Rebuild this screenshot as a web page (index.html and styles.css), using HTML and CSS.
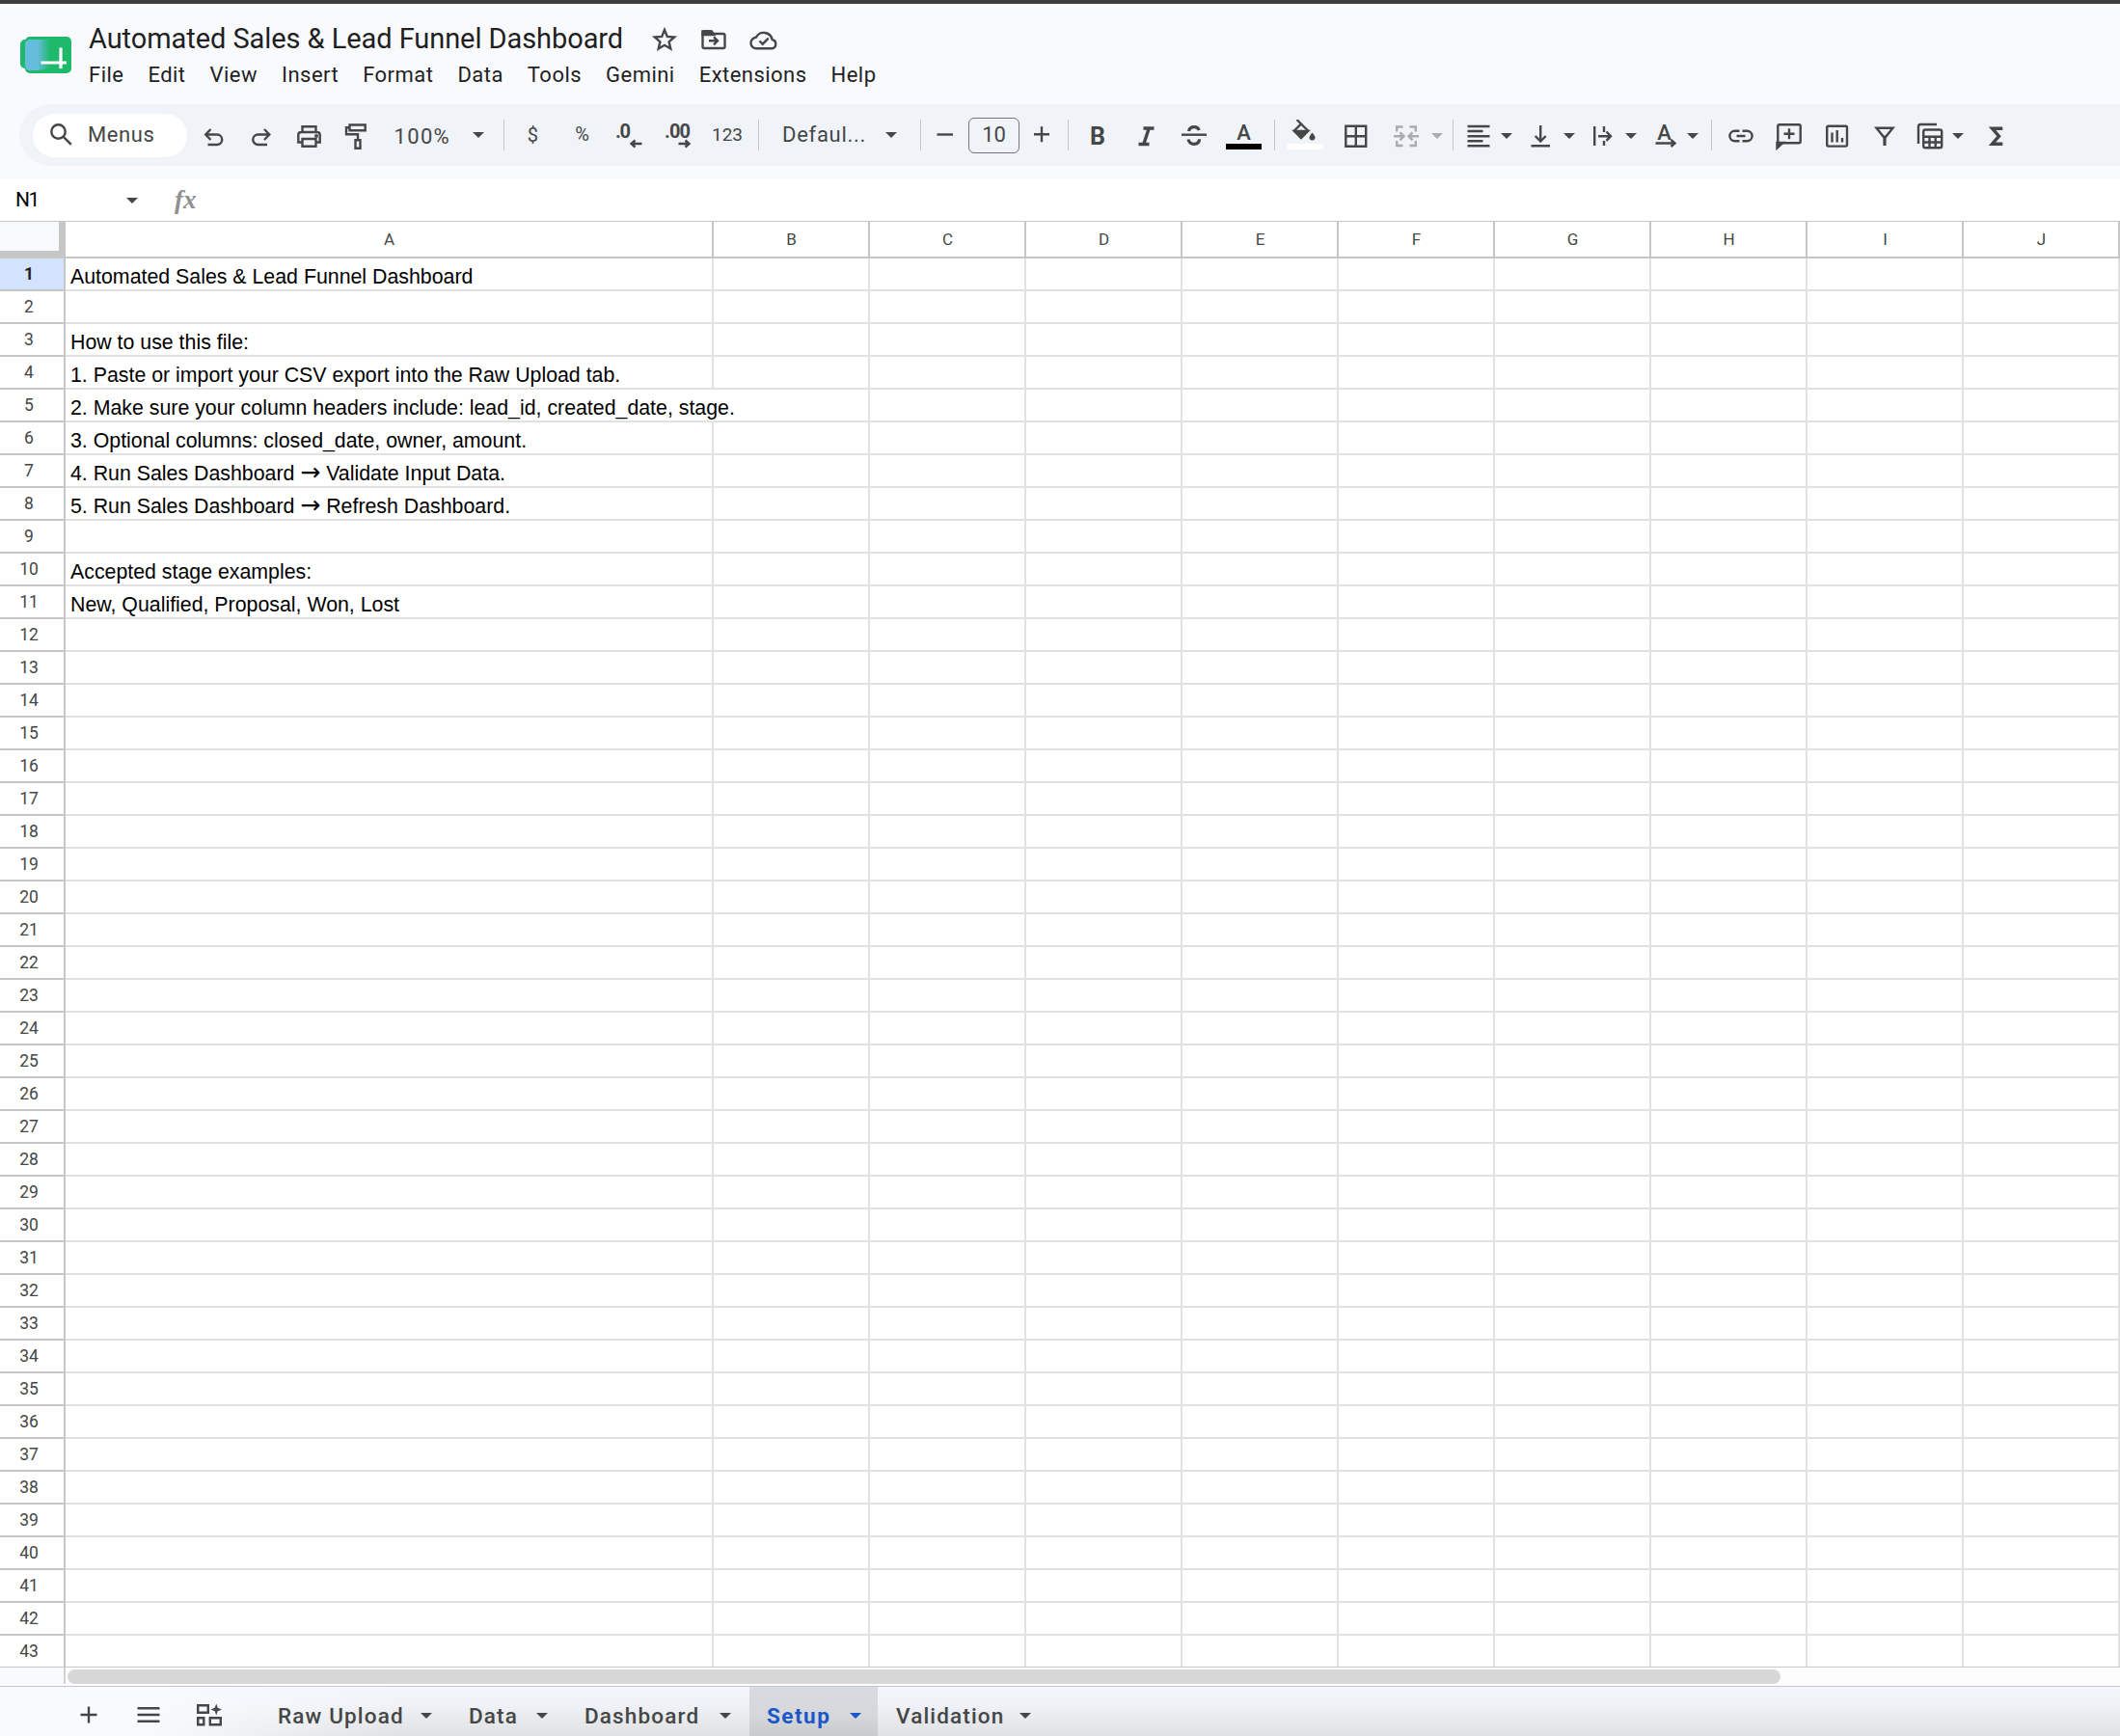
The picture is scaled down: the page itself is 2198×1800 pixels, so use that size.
FILE: index.html
```
<!DOCTYPE html>
<html>
<head>
    <meta charset="utf-8" />
    <title>Automated Sales &amp; Lead Funnel Dashboard</title>
    <link rel="stylesheet" href="styles.css">
</head>
<body>
<header>
    <svg class="logo" viewBox="0 0 54 38">
        <defs>
            <linearGradient id="fold" x1="0" x2="1">
                <stop offset="0" stop-color="#66bcdc" />
                <stop offset=".5" stop-color="#66bcdc" />
                <stop offset="1" stop-color="#1eb96b" />
            </linearGradient>
        </defs>
        <rect x="0" y="3" width="20" height="30" rx="5" fill="#1eb96b" />
        <rect x="5" y="0" width="48" height="38" rx="5" fill="#1eb96b" />
        <path d="M9 3h22v30l-13 2H8q-3-2-3-5V8q0-4 4-5z" fill="url(#fold)" />
        <path d="M21.500 27H48M42 11.500V33" stroke="#fff" stroke-width="3.200" fill="none" />
    </svg>
    <div class="heading">
        <div class="title">
            <h1>Automated Sales &amp; Lead Funnel Dashboard</h1>
            <svg class="ic star" viewBox="0 0 32 32"><path d="M16 6l2.800 6.900 7.400.6-5.600 4.900 1.700 7.200-6.300-3.800-6.300 3.800 1.700-7.200-5.600-4.900 7.400-.6z" /></svg>
            <svg class="ic folder" viewBox="0 0 32 32"><path d="M4.500 8.500v14.700q0 1.800 1.800 1.800h19.400q1.800 0 1.800-1.800V11.800q0-1.800-1.800-1.800H16l-2.500-2.500H6.300q-1.800 0-1.800 1.500z" /><path class="fill" d="M4.500 7.500h9L16 11H4.500z" /><path d="M11 17.300h8M16 13.300l4 4-4 4" /></svg>
            <svg class="ic cloud" viewBox="0 0 32 32"><path d="M8.500 25.200a5.700 5.700 0 0 1-.7-11.400 9 9 0 0 1 16.800 2.200 4.700 4.700 0 0 1-.1 9.200z" /><path d="M11.500 17.500l3.200 3.200 6-6" /></svg>
        </div>
        <nav>
            <a>File</a><a>Edit</a><a>View</a><a>Insert</a><a>Format</a><a>Data</a><a>Tools</a><a>Gemini</a><a>Extensions</a><a>Help</a>
        </nav>
    </div>
</header>

<div class="toolbar">
    <div class="menus">
        <svg class="ic" viewBox="0 0 32 32"><circle cx="12.500" cy="12.500" r="7.200" /><path d="M17.800 17.800l8 8" /></svg>
        <span>Menus</span>
    </div>
    <svg class="ic" viewBox="0 0 32 32"><path d="M9.500 26h9.500a5 5 0 0 0 0-10.500H7.500M12.500 10l-5.300 5.500 5.300 5.500" /></svg>
    <svg class="ic" viewBox="0 0 32 32"><path d="M23 26h-9.500a5 5 0 0 1 0-10.500H25M20 10l5.300 5.500-5.300 5.500" /></svg>
    <svg class="ic" viewBox="0 0 32 32"><path d="M9.500 12.500V7.300h14v5.200M9 23.500H5.300V16q0-3 3-3h16.400q3 0 3 3v7.500H24M9.500 20h14v7.700h-14z" /><circle class="fill" cx="24" cy="17" r=".8" /></svg>
    <svg class="ic" viewBox="0 0 32 32"><path d="M9.500 5.500h16.200v5.700H9.500zM9.500 8.200H6v7h12v6M15.500 21.200h5v8.500h-5z" /></svg>
    <span class="zoom">100%</span>
    <i class="caret up"></i>
    <i class="sep"></i>
    <span class="fmt">$</span>
    <span class="fmt pct">%</span>
    <svg class="ic" viewBox="0 0 32 32"><text x="2" y="19" textLength="16">.0</text><path d="M29.500 25h-10M22.500 21.500l-4 3.500 4 3.500" /></svg>
    <svg class="ic" viewBox="0 0 32 32"><text x="1" y="19" textLength="27">.00</text><path d="M15.500 25h10M22.500 21.500l4 3.500-4 3.500" /></svg>
    <span class="fmt num">123</span>
    <i class="sep"></i>
    <span class="font">Defaul...</span>
    <i class="caret up"></i>
    <i class="sep"></i>
    <svg class="ic" viewBox="0 0 32 32"><path d="M7.500 15.500H24" /></svg>
    <span class="size">10</span>
    <svg class="ic" viewBox="0 0 32 32"><path d="M8 15.300h16M16 7.300v16" /></svg>
    <i class="sep"></i>
    <svg class="ic bold" viewBox="0 0 32 32"><text x="8" y="25.500">B</text></svg>
    <svg class="ic heavy" viewBox="0 0 32 32"><path d="M13.500 9h11M8.500 25.500h11M19.200 9l-5.400 16.500" /></svg>
    <svg class="ic" viewBox="0 0 32 32"><path d="M3 15.700h26" /><path class="thick" d="M10.500 12q1-4.300 5.500-4.300 4 0 5.200 3.300M10 20.500q1 4.800 6 4.800 5.500 0 5.500-5" /></svg>
    <svg class="ic wide" viewBox="0 0 37 32"><text x="18.500" y="20.500" text-anchor="middle">A</text><path class="bar" d="M0 25h37v6H0z" /></svg>
    <i class="sep"></i>
    <svg class="ic wide" viewBox="0 0 37 32"><path d="M9.500 0l4.500 4.500M14 4.500l7 7-7 7-7-7z" /><path class="fill" d="M7 12h14l-7 7z" /><path class="drop" d="M25.500 13.500q-3 3.500-3 5a3 3 0 0 0 6 0q0-1.500-3-5z" /><path class="bar white" d="M0 25h37v6H0z" /></svg>
    <svg class="ic" viewBox="0 0 32 32"><path d="M5.300 6.800h20.900v20.900H5.300zM15.800 6.800v20.900M5.300 17.200h20.900" /></svg>
    <svg class="ic off" viewBox="0 0 32 32"><path d="M12.500 7.500H6.200v5M6.200 22v5h6.300M19.500 7.500h6.300v5M25.800 22v5h-6.300M3 17.300h9M9.500 13.300l4 4-4 4M29 17.300h-9M22.500 13.300l-4 4 4 4" /></svg>
    <i class="caret off"></i>
    <i class="sep"></i>
    <svg class="ic" viewBox="0 0 32 32"><path d="M4.500 7h23M4.500 12h16M4.500 17.200h23M4.500 22.200h16M4.500 27.300h23" /></svg>
    <i class="caret"></i>
    <svg class="ic" viewBox="0 0 32 32"><path d="M6.500 27.200h19.500M16.200 6v15.500M10.700 17l5.500 5.500 5.500-5.500" /></svg>
    <i class="caret"></i>
    <svg class="ic" viewBox="0 0 32 32"><path d="M7.200 7v20M17 7v6M17 22v5M11 17.200h13M19.500 12.500l4.500 4.700-4.500 4.700" /></svg>
    <i class="caret"></i>
    <svg class="ic rotate" viewBox="0 0 32 32"><text x="14.500" y="20.500" text-anchor="middle">A</text><path d="M5.500 24.500h19M21.500 21l4 3.500-4 3.500" /></svg>
    <i class="caret"></i>
    <i class="sep"></i>
    <svg class="ic" viewBox="0 0 32 32"><path d="M14.500 11.700H9.700a5.300 5.300 0 0 0 0 10.600h4.800M17.500 11.700h4.800a5.300 5.300 0 0 1 0 10.600h-4.800M11.500 17h9" /></svg>
    <svg class="ic" viewBox="0 0 32 32"><path d="M4.300 27V6.800q0-1.500 1.500-1.500h20.400q1.500 0 1.500 1.500v15.900q0 1.500-1.500 1.500H7.500zM10.500 14.800h11M16 9.300v11" /><path class="fill" d="M3.500 24h6L3.500 29.500z" /></svg>
    <svg class="ic" viewBox="0 0 32 32"><rect x="5.200" y="6.800" width="20.800" height="20.800" rx="1.500" /><path d="M10.500 13.500v10M15.700 11v12.500M21 19v4.500" /></svg>
    <svg class="ic" viewBox="0 0 32 32"><path d="M7.500 8.700h17l-7.300 9h-2.400z" /><path class="thick" d="M16 17v10" /></svg>
    <svg class="ic" viewBox="0 0 32 32"><path d="M4 25V7q0-2 2-2h17" /><rect x="9.200" y="10.500" width="19" height="18.700" rx="2" /><path d="M9 17.700h19M9 23.500h19M15.500 17.700v11.500M21.700 17.700v11.500" /></svg>
    <i class="caret"></i>
    <svg class="ic heavy" viewBox="0 0 32 32"><path d="M22.300 9.200H11.500l7 8-7 8h10.800" /></svg>
</div>

<div class="formula">
    <span class="cellname">N1</span>
    <i class="caret"></i>
    <span class="fx">fx</span>
</div>

<div class="sheet" id="sheet"></div>

<div class="scroll">
    <div class="stub"></div>
    <div class="thumb"></div>
</div>

<footer>
    <svg class="ic add" viewBox="0 0 32 32"><path d="M7.500 16h17M16 7.500v17" /></svg>
    <svg class="ic all" viewBox="0 0 32 32"><path d="M4.500 9.300h23M4.500 16h23M4.500 22.700h23" /></svg>
    <svg class="ic boards" viewBox="0 0 32 32"><path d="M4.200 6.300h10.600v7.400H4.200zM4.200 19.300h6.100v6.900H4.200zM16.800 19.300h11v6.900h-11z" /><path class="drop" d="M23.200 4.500l1.500 4.300 4.300 1.700-4.300 1.700-1.500 4.300-1.500-4.300-4.300-1.700 4.300-1.700z" /></svg>
    <div class="tab raw">Raw Upload<i class="caret"></i></div>
    <div class="tab data">Data<i class="caret"></i></div>
    <div class="tab dash">Dashboard<i class="caret"></i></div>
    <div class="tab setup active">Setup<i class="caret"></i></div>
    <div class="tab valid">Validation<i class="caret"></i></div>
</footer>

<script type="text/javascript" src="sheet.js"></script>
</body>
</html>
```
FILE: styles.css
```
body {
    margin: 0;
    width: 2198px;
    height: 1800px;
    overflow: hidden;
    background: #f9fafe;
    color: #1f1f1f;
    font-family: Roboto, 'Liberation Sans', sans-serif;
    font-size: 22px;
}
header {
    display: flex;
    height: 104px;
    border-top: 4px solid #3e3e3e;
}
.logo {
    width: 54px;
    height: 38px;
    margin: 34px 17px 0 21px;
}
.title {
    display: flex;
    align-items: center;
    height: 40px;
    padding-top: 17px;
}
h1 {
    width: 553px;
    margin: -2px 0 0;
    font-size: 29px;
    font-weight: normal;
    letter-spacing: -.07px;
    white-space: nowrap;
}
nav {
    display: flex;
    gap: 25px;
    padding-top: 4px;
    line-height: 26px;
    letter-spacing: .47px;
}

/* icons */
.ic {
    flex: none;
    width: 32px;
    height: 32px;
    fill: none;
    stroke: #444746;
    stroke-width: 2.4;
}
    .ic.wide { width: 37px; }
    .ic .fill, .ic .drop {
        fill: #444746;
    }
    .ic .drop, .ic .bar {
        stroke: none;
    }
    .ic .bar { fill: #000; }
    .ic .white { fill: #fff; }
    .ic .thick { stroke-width: 3.2; }
    .ic.heavy { stroke-width: 3.4; }
    .ic.off { stroke: #a9abac; }
    .ic text {
        fill: #444746;
        stroke: none;
        font-size: 20px;
        font-weight: bold;
    }
    .ic.wide text, .ic.rotate text {
        font-size: 22px;
        font-weight: 500;
    }
    .ic.bold text { font-size: 25px; }
.star { margin-left: 28px; }
.folder { margin-left: 19px; }
.cloud { margin-left: 20px; }
.caret {
    flex: none;
    width: 0;
    border: 6.5px solid transparent;
    border-top: 6.5px solid #444746;
    border-bottom: 0;
    margin-top: 2px;
}
    .caret.up { margin-top: 0; }
    .caret.off { border-top-color: #a9abac; }
.sep {
    width: 1px;
    height: 32px;
    background: #c4c7c5;
}

/* every track ends at the right edge of its button */
.toolbar {
    display: grid;
    grid-template-columns: 174px 44px 48px 50px 49px 82px 35px 21px 35px 54px 56px 52px 49px 18px 108px 35px 25px 41px 61px 39px 12px 46px 50px 50px 54px 14px 50px 50px 52px 22px 11px 42px 19px 45px 20px 45px 19px 46px 18px 14px 46px 50px 50px 49px 47px 19px 50px;
    justify-items: end;
    align-items: center;
    height: 64px;
    margin-left: 20px;
    border-radius: 32px 0 0 32px;
    background: #f0f3f8;
    color: #444746;
    white-space: nowrap;
}
.menus {
    display: flex;
    align-items: center;
    width: 146px;
    height: 45px;
    padding-left: 14px;
    border-radius: 23px;
    background: #fff;
    letter-spacing: .6px;
}
    .menus span {
        margin: -2px 0 0 11px;
    }
.zoom {
    padding-top: 2px;
    letter-spacing: 1.3px;
}
.font {
    margin: -2px -3px 0 0;
    letter-spacing: .7px;
}
.fmt { font-size: 20px; }
    .pct {
        margin: -2px 1px 0 0;
    }
    .num {
        margin: -2px -1px 0 0;
        font-size: 19px;
    }
.size {
    width: 51px;
    height: 35px;
    border: 1px solid #747775;
    border-radius: 6px;
    line-height: 34px;
    text-align: center;
}

.formula {
    display: flex;
    align-items: center;
    height: 44px;
    margin-top: 13px;
    border-bottom: 1px solid #c4c7c5;
    background: #fff;
    color: #000;
}
.cellname {
    width: 115px;
    padding-left: 16px;
    font-size: 21px;
    letter-spacing: -1.5px;
}
.fx {
    margin-left: 38px;
    color: #8f9190;
    font: italic bold 27px 'Liberation Serif', serif;
}

/* grid */
.row {
    display: flex;
    height: 34px;
    background: #fff;
}
.row div {
    box-sizing: border-box;
    flex: none;
    width: 162px;
    border-right: 2px solid #e1e1e1;
    border-bottom: 2px solid #e1e1e1;
}
    .row .a { width: 672px; }
    .row .n {
        width: 68px;
        padding-right: 6px;
        border-color: #c4c7c5;
        color: #444746;
        font-size: 17.5px;
        line-height: 32px;
        text-align: center;
    }
    .row.selected .n {
        background: #d3e3fd;
        color: #1f1f1f;
        font-weight: bold;
    }
    .row .a {
        padding-left: 5px;
        color: #000;
        font: 21.34px/39px 'Liberation Sans', Arial, sans-serif;
        white-space: nowrap;
    }
    .row .spill { border-right-color: #fff; }
    .row b {
        font: 25px/1 'DejaVu Sans', sans-serif;
    }
    .row:last-child { height: 32px; }
    .row:last-child div { border-bottom: 0; }
.row.head { height: 38px; }
    .row.head div {
        padding: 0 0 0 1px;
        border-color: #c4c7c5;
        color: #444746;
        font: 17px/37px Roboto, sans-serif;
        text-align: center;
    }
    .row.head .n {
        border-width: 0 7px 8px 0;
        border-style: solid;
        background: #f8f9fd;
    }

.scroll {
    display: flex;
    height: 19px;
    border: 1px solid #c4c7c5;
    border-width: 1px 0;
    background: #fdfdfe;
}
.stub {
    width: 66px;
    height: 17px;
    border-right: 2px solid #d0d2d2;
    background: #f9fafe;
}
.thumb {
    width: 1776px;
    height: 15px;
    margin: 2px 0 0 2px;
    border-radius: 8px;
    background: #d7d7d7;
}

footer {
    display: flex;
    align-items: center;
    height: 51px;
    background: linear-gradient(90deg, #f9fafe 150px, rgba(249,250,254,0) 420px), linear-gradient(#f4f6fb, #eff2f7 35%, #e0e1e2);
    color: #444746;
}
footer .ic { margin-top: 6px; }
.add { margin-left: 76px; }
.all { margin-left: 30px; }
.boards { margin-left: 31px; }
.tab {
    display: flex;
    box-sizing: border-box;
    align-items: center;
    justify-content: space-between;
    height: 51px;
    padding-top: 9px;
    font-size: 22.5px;
    font-weight: 500;
    letter-spacing: 1.15px;
    white-space: nowrap;
}
    .tab .caret { margin-top: -1px; }
.raw { width: 160px; margin-left: 55px; }
.data { width: 82px; margin-left: 38px; }
.dash { width: 152px; margin-left: 38px; }
.setup {
    width: 133px;
    margin-left: 19px;
    padding-right: 17px;
    padding-left: 18px;
}
.active {
    background: linear-gradient(#d8dbe1, #d5d7da 60%, #c9cacc);
    color: #1a57c9;
    font-weight: bold;
    letter-spacing: 1.5px;
}
    .active .caret { border-top-color: #1a57c9; }
.valid { width: 140px; margin-left: 19px; }
```
FILE: sheet.js
```
var cells = {
    1: "Automated Sales & Lead Funnel Dashboard",
    3: "How to use this file:",
    4: "1. Paste or import your CSV export into the Raw Upload tab.",
    5: "2. Make sure your column headers include: lead_id, created_date, stage.",
    6: "3. Optional columns: closed_date, owner, amount.",
    7: "4. Run Sales Dashboard → Validate Input Data.",
    8: "5. Run Sales Dashboard → Refresh Dashboard.",
    10: "Accepted stage examples:",
    11: "New, Qualified, Proposal, Won, Lost"
};
var columns = "BCDEFGHIJ".split("");

function display(parent) {
    var out = [];
    out.push("<div class='row head'><div class='n'></div><div class='a'>A</div>");
    for (var c=0; c<columns.length; c++) {
        out.push("<div>" + columns[c] + "</div>");
    }
    out.push("</div>");
    for (var r=1; r<=43; r++) {
        var text = (cells[r] || "").replace("&", "&amp;").replace("→", "<b>→</b>");
        out.push("<div class='row" + (r == 1 ? " selected" : "") + "'><div class='n'>" + r + "</div>");
        // row 5 runs over into column B
        out.push("<div class='a" + (r == 5 ? " spill" : "") + "'>" + text + "</div>");
        for (c=0; c<columns.length; c++) {
            out.push("<div></div>");
        }
        out.push("</div>");
    }
    parent.innerHTML = out.join("");
}

display(document.getElementById("sheet"));
```
